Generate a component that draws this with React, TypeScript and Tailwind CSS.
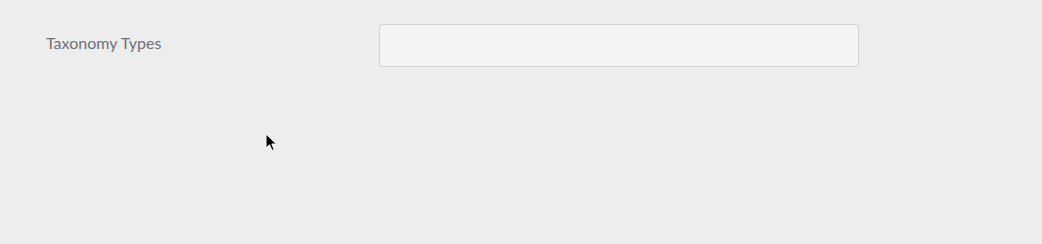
export default function App() {
  return (
    <div className="relative h-[244px] w-full bg-[#ededed] font-['Lato',sans-serif]">
      <div className="flex items-start pl-[46px] pt-[24px]">
        <label className="mt-[7px] w-[333px] text-[16px] leading-[24px] text-[#6e7177]">Taxonomy Types</label>
        <input
          type="text"
          className="h-[43px] w-[480px] rounded-[3px] border border-[#d2d2d2] bg-[#f4f4f4] px-3 outline-none"
        />
      </div>
      <svg
        className="absolute left-[265px] top-[133px]"
        width="14"
        height="20"
        viewBox="0 0 14 20"
      >
        <path
          d="M1 1 L1 15 L4.5 11.8 L7 17.5 L9.2 16.5 L6.8 11 L11.5 11 Z"
          fill="#000"
          stroke="#fff"
          strokeWidth="1"
          strokeLinejoin="round"
        />
      </svg>
    </div>
  );
}
